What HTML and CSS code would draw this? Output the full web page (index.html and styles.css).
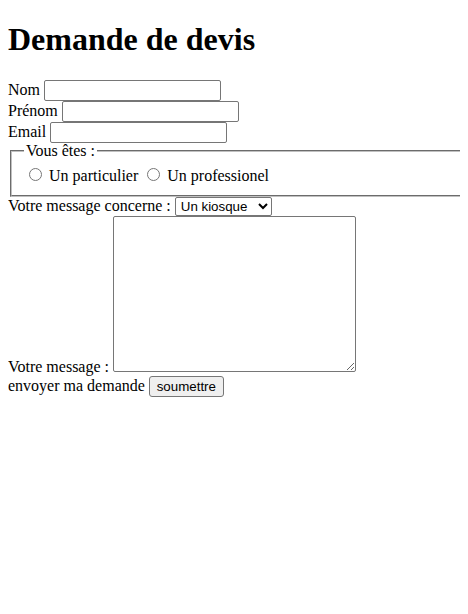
FILE: index.html
```html
<!DOCTYPE html>
<html lang="fr">
<head>
<meta charset="utf-8">
<title>Demande de devis</title>
<link rel="stylesheet" href="styles.css">
</head>
<body>
<h1 class="title">Demande de devis</h1>
<form class="form">
<label for="nom">Nom</label> <input class="text" type="text" id="nom"><br>
<label for="prenom">Prénom</label> <input class="text" type="text" id="prenom"><br>
<label for="email">Email</label> <input class="text" type="email" id="email"><br>
<fieldset class="group">
<legend class="legend">Vous êtes :</legend>
<input class="radio" type="radio" name="type" id="part"> <label for="part">Un particulier</label>
<input class="radio" type="radio" name="type" id="pro"> <label for="pro">Un professionel</label>
</fieldset>
<label for="sujet">Votre message concerne :</label> <select class="select" id="sujet"><option>Un kiosque</option><option>Autre</option></select><br>
<label for="msg">Votre message :</label> <textarea class="area" id="msg"></textarea><br>
<label>envoyer ma demande</label> <input class="submit" type="submit" value="soumettre">
</form>
</body>
</html>
```
FILE: styles.css
```css
html {
  overflow-x: hidden;
}
html, body {
  font-family: "Liberation Serif", "Times New Roman", serif;
  font-size: 16px;
  color: #000;
  background: #fff;
}
body {
  margin: 8px;
}
.title {
  font-size: 32px;
  font-weight: bold;
  margin: 13px 0 22px;
}
.text {
  box-sizing: border-box;
  width: 177px;
  height: 21px;
  border: 1px solid #767676;
  border-radius: 2px;
  padding: 1px 2px;
  font-family: "Liberation Sans", Arial, sans-serif;
  font-size: 13.33px;
  margin: 0;
  vertical-align: baseline;
}
.group {
  box-sizing: border-box;
  width: 490px;
  margin: -1px 0 0 2px;
  padding: 4.6px 12px 10px 12px;
  border: 2px groove #c0c0c0;
}
.legend {
  padding: 0 2px;
}
.radio {
  margin: 3px 3px 0 5px;
  width: 13px;
  height: 13px;
}
.select {
  box-sizing: border-box;
  width: 97px;
  font-family: "Liberation Sans", Arial, sans-serif;
  font-size: 13.33px;
  height: 19px;
  padding: 0 0 0 1px;
  border: 1px solid #767676;
  border-radius: 2px;
  background: #fff;
  margin: 0;
}
.area {
  box-sizing: border-box;
  width: 243px;
  height: 156px;
  border: 1px solid #767676;
  border-radius: 2px;
  margin: 0;
  vertical-align: baseline;
}
.submit {
  box-sizing: border-box;
  width: 75px;
  font-family: "Liberation Sans", Arial, sans-serif;
  font-size: 13.33px;
  padding: 1px 6px;
  border: 1px solid #767676;
  border-radius: 3px;
  background: #efefef;
  margin: 0;
  height: 21px;
}
```
